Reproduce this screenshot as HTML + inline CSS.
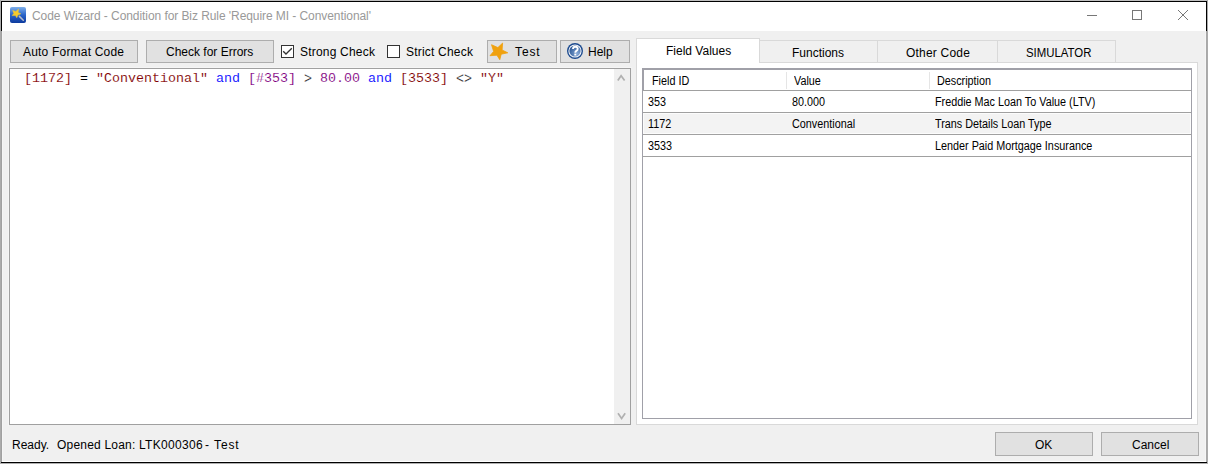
<!DOCTYPE html>
<html><head><meta charset="utf-8">
<style>
*{box-sizing:border-box;}
html,body{margin:0;padding:0;}
body{width:1208px;height:464px;position:relative;overflow:hidden;background:#f0f0f0;font-family:"Liberation Sans",sans-serif;font-size:12px;color:#000;}
.a{position:absolute;}
.t{position:absolute;white-space:nowrap;line-height:14px;}
.btn{position:absolute;background:#e1e1e1;border:1px solid #adadad;}
.cb{position:absolute;width:13px;height:13px;border:1px solid #333;background:#fff;}
.tab{position:absolute;top:40px;height:22px;background:#f0f0f0;border:1px solid #d9d9d9;border-bottom:none;}
.g{position:absolute;white-space:nowrap;line-height:14px;transform:scaleX(0.9);transform-origin:0 0;}
.hl{position:absolute;height:1px;background:#a0a0a0;}
.op{display:inline-block;transform:translateY(1px) scaleY(1.1);transform-origin:50% 50%;color:#222;}
.code{position:absolute;font-family:"Liberation Mono",monospace;font-size:13.333px;line-height:16px;white-space:pre;-webkit-text-stroke:0.1px #fff;}
</style></head><body>
<!-- outer frame -->
<div class="a" style="left:0;top:0;width:1208px;height:1px;background:#c0c0c0"></div>
<div class="a" style="left:0;top:0;width:1px;height:464px;background:#ababab"></div>
<div class="a" style="left:1207px;top:0;width:1px;height:464px;background:#ababab"></div>
<div class="a" style="left:0;top:463px;width:1208px;height:1px;background:#b0b0b0"></div>
<div class="a" style="left:1px;top:31px;width:1px;height:431px;background:#a0a0a0"></div>
<div class="a" style="left:2px;top:31px;width:1px;height:430px;background:#f5f5f5"></div>
<div class="a" style="left:1206px;top:31px;width:1px;height:431px;background:#a8a8a8"></div>
<div class="a" style="left:1205px;top:31px;width:1px;height:430px;background:#f5f5f5"></div>
<div class="a" style="left:2px;top:461px;width:1204px;height:1px;background:#fff"></div>
<div class="a" style="left:1px;top:462px;width:1206px;height:1px;background:#000"></div>

<!-- title bar -->
<div class="a" style="left:1px;top:1px;width:1206px;height:30px;background:#fff;border:1px solid #000;border-bottom:none"></div>
<svg class="a" style="left:10px;top:7px" width="16" height="16" viewBox="0 0 16 16">
  <defs><linearGradient id="ig" x1="0" y1="0" x2="0" y2="1"><stop offset="0" stop-color="#7fb0ea"/><stop offset="0.5" stop-color="#2a64c8"/><stop offset="1" stop-color="#0d3a9e"/></linearGradient></defs>
  <rect x="0" y="0" width="16" height="16" rx="2" fill="url(#ig)"/>
  <path d="M9.4 9.4 L13.3 13.3" stroke="#b8bcc8" stroke-width="1.5" stroke-linecap="round"/>
  <path d="M8.6 2.1 L8.1 5.5 L10.9 6.8 L7.9 8.1 L6.8 10.7 L5.5 8.6 L2.1 8.6 L3.8 6.4 L2.7 3.4 L5.8 4.5 Z" fill="#f6cb2c" stroke="#f6cb2c" stroke-width="0.5" stroke-linejoin="round"/>
</svg>
<div class="t" style="left:32px;top:9px;color:#999;letter-spacing:-0.07px">Code Wizard - Condition for Biz Rule 'Require MI - Conventional'</div>
<div class="a" style="left:1087px;top:15px;width:10px;height:1px;background:#777"></div>
<div class="a" style="left:1132px;top:10px;width:10px;height:10px;border:1px solid #777"></div>
<svg class="a" style="left:1177px;top:9px" width="12" height="12" viewBox="0 0 12 12"><path d="M1 1 L11 11 M11 1 L1 11" stroke="#777" stroke-width="1"/></svg>

<!-- toolbar -->
<div class="btn" style="left:10px;top:40px;width:128px;height:23px"></div>
<div class="t" style="left:23px;top:45px;letter-spacing:0.2px">Auto Format Code</div>
<div class="btn" style="left:146px;top:40px;width:128px;height:23px"></div>
<div class="t" style="left:166px;top:45px">Check for Errors</div>
<div class="cb" style="left:281px;top:45px"></div>
<svg class="a" style="left:281px;top:45px" width="13" height="13" viewBox="0 0 13 13"><path d="M2.2 6.2 L5 9 L10.8 3.2" stroke="#333" stroke-width="1.3" fill="none"/></svg>
<div class="t" style="left:300px;top:45px;letter-spacing:0.2px">Strong Check</div>
<div class="cb" style="left:387px;top:45px"></div>
<div class="t" style="left:406px;top:45px;letter-spacing:0.2px">Strict Check</div>
<div class="btn" style="left:487px;top:40px;width:70px;height:23px"></div>
<svg class="a" style="left:486px;top:40px" width="26" height="22" viewBox="486 40 26 22">
  <path d="M502.6 43.1 L502.1 50 L507.8 52.8 L501.2 54.2 L499.8 59.7 L496.9 55.2 L490 55.7 L493.6 51.4 L491.5 44.7 L497.9 47.6 Z" fill="#f0a10e" stroke="#f0a10e" stroke-width="0.8" stroke-linejoin="round"/>
</svg>
<div class="t" style="left:515px;top:45px;letter-spacing:0.9px">Test</div>
<div class="btn" style="left:560px;top:40px;width:70px;height:23px"></div>
<svg class="a" style="left:567px;top:43px" width="16" height="16" viewBox="0 0 16 16">
  <defs><radialGradient id="hg" cx="0.7" cy="0.75" r="0.9"><stop offset="0" stop-color="#86a8d6"/><stop offset="1" stop-color="#23508f"/></radialGradient></defs>
  <circle cx="8" cy="8" r="8" fill="#1d4b8f"/>
  <circle cx="8" cy="8" r="6.6" fill="#f4f6fa"/>
  <circle cx="8" cy="8" r="5.6" fill="url(#hg)"/>
  <path d="M6 6.1 Q6 3.7 8.3 3.7 Q10.7 3.7 10.7 5.8 Q10.7 7.1 9.4 7.8 Q8.3 8.4 8.3 9.7" stroke="#fff" stroke-width="1.9" fill="none"/>
  <rect x="7.3" y="10.6" width="2" height="1.9" fill="#fff"/>
</svg>
<div class="t" style="left:588px;top:45px">Help</div>

<!-- editor -->
<div class="a" style="left:8px;top:67px;width:624px;height:359px;border:1px solid #f5f5f5;border-right:none;border-bottom:none"></div>
<div class="a" style="left:9px;top:68px;width:622px;height:357px;border:1px solid #a0a0a0;background:#fff"></div>
<div class="a" style="left:614px;top:69px;width:16px;height:355px;background:#f0f0f0"></div>
<svg class="a" style="left:614px;top:69px" width="16" height="355" viewBox="0 0 16 355">
  <path d="M3.8 11.6 L7.1 6.8 L10.6 11.6" stroke="#b0b0b0" stroke-width="1.7" fill="none"/>
  <path d="M4 344.2 L7.6 349.4 L11.2 344.2" stroke="#b0b0b0" stroke-width="1.7" fill="none"/>
</svg>
<div class="code" style="left:24px;top:71px"><span style="color:#800000">[1172]</span> = <span style="color:#800000">"Conventional"</span> <span style="color:#0000ff">and</span> <span style="color:#800080">[#353]</span> <span class="op">&gt;</span> <span style="color:#800080">80.00</span> <span style="color:#0000ff">and</span> <span style="color:#800000">[3533]</span> <span class="op">&lt;&gt;</span> <span style="color:#800000">"Y"</span></div>

<!-- tab control -->
<div class="a" style="left:636px;top:62px;width:562px;height:363px;background:#fff;border:1px solid #d9d9d9"></div>
<div class="tab" style="left:759px;width:119px"></div>
<div class="tab" style="left:877px;width:121px"></div>
<div class="tab" style="left:997px;width:119px"></div>
<div class="a" style="left:636px;top:38px;width:124px;height:25px;background:#fff;border:1px solid #d9d9d9;border-bottom:none"></div>
<div class="t" style="left:666px;top:44px">Field Values</div>
<div class="t" style="left:792px;top:46px">Functions</div>
<div class="t" style="left:906px;top:46px;letter-spacing:0.2px">Other Code</div>
<div class="t" style="left:1026px;top:46px;transform:scaleX(0.95);transform-origin:0 0">SIMULATOR</div>

<!-- grid -->
<div class="a" style="left:642px;top:68px;width:550px;height:351px;border:1px solid #a0a0a8;background:#fff"></div>
<div class="a" style="left:643px;top:69px;width:548px;height:1px;background:#a0a0a8"></div>
<div class="a" style="left:643px;top:69px;width:1px;height:21px;background:#a0a0a8"></div>
<div class="hl" style="left:643px;top:90px;width:548px"></div>
<div class="a" style="left:786px;top:72px;width:1px;height:17px;background:#e5e5e5"></div>
<div class="a" style="left:929px;top:72px;width:1px;height:17px;background:#e5e5e5"></div>
<div class="a" style="left:643px;top:113px;width:548px;height:21px;background:#f3f3f3;border:1px solid #fcfcfc"></div>
<div class="hl" style="left:643px;top:112px;width:548px"></div>
<div class="hl" style="left:643px;top:134px;width:548px"></div>
<div class="hl" style="left:643px;top:156px;width:548px"></div>
<div class="g" style="left:652px;top:74px">Field ID</div>
<div class="g" style="left:794px;top:74px">Value</div>
<div class="g" style="left:937px;top:74px">Description</div>
<div class="g" style="left:648px;top:95px">353</div>
<div class="g" style="left:792px;top:95px">80.000</div>
<div class="g" style="left:935px;top:95px">Freddie Mac Loan To Value (LTV)</div>
<div class="g" style="left:648px;top:117px">1172</div>
<div class="g" style="left:792px;top:117px">Conventional</div>
<div class="g" style="left:935px;top:117px">Trans Details Loan Type</div>
<div class="g" style="left:648px;top:139px">3533</div>
<div class="g" style="left:935px;top:139px">Lender Paid Mortgage Insurance</div>

<!-- status / bottom buttons -->
<div class="t" style="left:12px;top:438px">Ready.</div>
<div class="t" style="left:57px;top:438px;letter-spacing:0.2px">Opened Loan:</div>
<div class="t" style="left:139px;top:438px;letter-spacing:0.3px">LTK000306</div>
<div class="t" style="left:205px;top:438px">-</div>
<div class="t" style="left:214px;top:438px;letter-spacing:0.9px">Test</div>
<div class="btn" style="left:995px;top:432px;width:98px;height:24px"></div>
<div class="t" style="left:1035px;top:438px">OK</div>
<div class="btn" style="left:1101px;top:432px;width:98px;height:24px"></div>
<div class="t" style="left:1132px;top:438px">Cancel</div>
</body></html>
